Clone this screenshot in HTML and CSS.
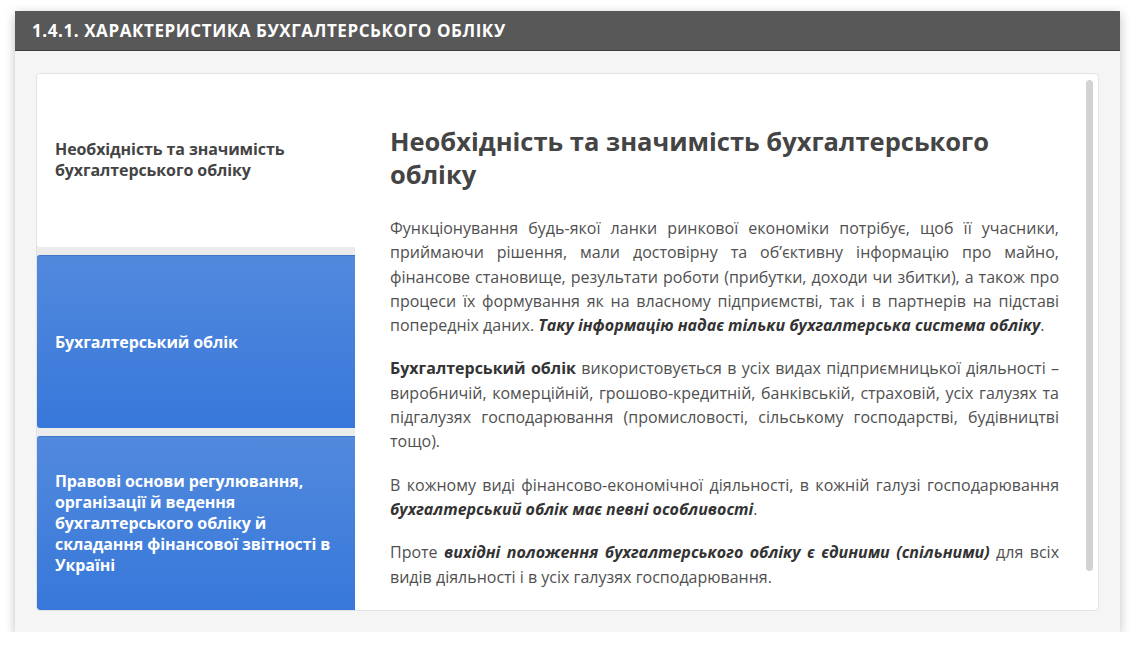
FILE: index.html
```html
<!DOCTYPE html>
<html lang="uk">
<head>
<meta charset="utf-8">
<title>Характеристика бухгалтерського обліку</title>
<link rel="stylesheet" href="styles.css">
</head>
<body>
<div class="card">
  <div class="card-header">1.4.1. ХАРАКТЕРИСТИКА БУХГАЛТЕРСЬКОГО ОБЛІКУ</div>
  <div class="card-body">
    <div class="panel">
      <div class="tabs">
        <div class="tab active">Необхідність та значимість бухгалтерського обліку</div>
        <div class="tab">Бухгалтерський облік</div>
        <div class="tab">Правові основи регулювання, організації й ведення бухгалтерського обліку й складання фінансової звітності в Україні</div>
      </div>
      <div class="content">
        <h2 class="title">Необхідність та значимість бухгалтерського обліку</h2>
        <p>Функціонування будь-якої ланки ринкової економіки потрібує, щоб її учасники, приймаючи рішення, мали достовірну та об’єктивну інформацію про майно, фінансове становище, результати роботи (прибутки, доходи чи збитки), а також про процеси їх формування як на власному підприємстві, так і в партнерів на підставі попередніх даних. <b><i>Таку інформацію надає тільки бухгалтерська система обліку</i></b>.</p>
        <p><b>Бухгалтерський облік</b> використовується в усіх видах підприємницької діяльності – виробничій, комерційній, грошово-кредитній, банківській, страховій, усіх галузях та підгалузях господарювання (промисловості, сільському господарстві, будівництві тощо).</p>
        <p>В кожному виді фінансово-економічної діяльності, в кожній галузі господарювання <b><i>бухгалтерський облік має певні особливості</i></b>.</p>
        <p>Проте <b><i>вихідні положення бухгалтерського обліку є єдиними (спільними)</i></b> для всіх видів діяльності і в усіх галузях господарювання.</p>
        <div class="scrollbar"></div>
      </div>
    </div>
  </div>
</div>
</body>
</html>
```
FILE: styles.css
```css
* { box-sizing: border-box; }
html, body { margin: 0; padding: 0; background: #ffffff; }
body {
  font-family: "Open Sans", "Noto Sans", sans-serif;
  color: #4a4a4a;
  padding: 11px 16px 0 15px;
}
.card {
  width: 1105px;
  box-shadow: 0 3px 10px rgba(0,0,0,0.25);
  background: #f5f5f5;
}
.card-header {
  height: 40px;
  background: #585858;
  border-bottom: 1px solid #3f3f3f;
  color: #ffffff;
  font-weight: 700;
  font-size: 17px;
  line-height: 40px;
  padding-left: 17px;
  letter-spacing: 0.58px;
}
.card-body {
  padding: 22px 21px 21px 21px;
}
.panel {
  display: flex;
  height: 538px;
  background: #ffffff;
  border: 1px solid #e3e3e3;
  border-radius: 4px;
  overflow: hidden;
}
.tabs {
  width: 318px;
  flex: none;
  display: flex;
  flex-direction: column;
  gap: 8px;
  background: #ebebeb;
}
.tab {
  flex: 1;
  display: flex;
  align-items: center;
  padding: 0 20px 0 18px;
  font-size: 16px;
  font-weight: 700;
  line-height: 21px;
  color: #ffffff;
  background: linear-gradient(#5189dd, #3878da);
  border-top: 1px solid #3f74c9;
  border-radius: 3px 0 0 3px;
  letter-spacing: -0.1px;
}
.tab.active {
  background: #ffffff;
  color: #444444;
  border-top: none;
}
.content {
  position: relative;
  flex: 1;
  padding: 51px 39px 0 35px;
  overflow: hidden;
}
.title {
  margin: 0 0 25px 0;
  font-size: 25.5px;
  line-height: 33px;
  font-weight: 700;
  color: #444444;
}
.content p {
  margin: 0 0 19px 0;
  font-size: 16px;
  line-height: 24.3px;
  text-align: justify;
  color: #505050;
}
.content p b { color: #333333; }
.scrollbar {
  position: absolute;
  top: 6px;
  right: 5px;
  width: 7px;
  height: 491px;
  border-radius: 4px;
  background: #d2d2d2;
}
```
